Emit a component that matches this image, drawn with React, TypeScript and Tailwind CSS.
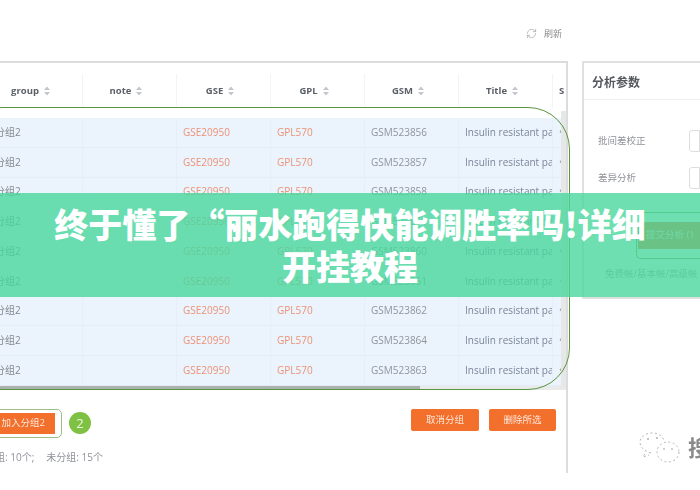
import { RefreshCw } from 'lucide-react';

const font = "font-['Open_Sans','Noto_Sans_CJK_SC',sans-serif]";

const columns = [
  { label: 'group', width: 'w-[113px] pl-[16px]' },
  { label: 'note', width: 'w-[94px]' },
  { label: 'GSE', width: 'w-[94px]' },
  { label: 'GPL', width: 'w-[94px]' },
  { label: 'GSM', width: 'w-[94px]' },
  { label: 'Title', width: 'w-[94px]' },
];

const samples = ['GSM523856', 'GSM523857', 'GSM523858', 'GSM523859', 'GSM523860', 'GSM523861', 'GSM523862', 'GSM523864', 'GSM523863'];

function SortCaret() {
  return (
    <svg width="8" height="10" viewBox="0 0 8 10" className="ml-[4px] shrink-0">
      <path d="M4 0.5 L7 4 H1 Z" fill="#c3c7cc" />
      <path d="M4 9.5 L7 6 H1 Z" fill="#c3c7cc" />
    </svg>
  );
}

function TableHeader() {
  return (
    <div className="mt-[11px] flex h-[34px]">
      {columns.map((col) => (
        <div key={col.label} className={`${col.width} flex shrink-0 items-center justify-center border-r border-[#f3f4f6] pr-[6px] text-[9.5px] font-bold text-[#5c6168]`}>
          {col.label}
          <SortCaret />
        </div>
      ))}
      <div className="flex items-center pl-[6px] text-[9.5px] font-bold text-[#5c6168]">S</div>
    </div>
  );
}

function Row({ gsm }: { gsm: string }) {
  return (
    <div className="flex h-[29.75px] items-center border-b border-[#e4edf7] bg-[#ebf3fc] text-[10px] whitespace-nowrap">
      <div className="flex h-full w-[113px] shrink-0 items-center border-r border-[#e6eff9] pl-[25px] text-[#85898f]">分组2</div>
      <div className="h-full w-[94px] shrink-0 border-r border-[#e6eff9]" />
      <div className="flex h-full w-[94px] shrink-0 items-center border-r border-[#e6eff9] pl-[6px] text-[#ec9277]">GSE20950</div>
      <div className="flex h-full w-[94px] shrink-0 items-center border-r border-[#e6eff9] pl-[6px] text-[#ec9277]">GPL570</div>
      <div className="flex h-full w-[94px] shrink-0 items-center border-r border-[#e6eff9] pl-[6px] text-[#90959c]">{gsm}</div>
      <div className="flex h-full w-[94px] shrink-0 items-center overflow-hidden border-r border-[#e6eff9] pl-[6px] text-[#7a8799]">Insulin resistant patient</div>
      <div className="pl-[6px] text-[#a3a8ae]">•</div>
    </div>
  );
}

function WechatMark() {
  return (
    <svg width="44" height="34" viewBox="0 0 44 34" className="absolute left-[638px] top-[432px]" fill="none" stroke="#b4b4b4" strokeWidth="1" strokeDasharray="2 2.5">
      <path d="M13 21 C6 19 2 15 2 10 C2 5 8 1 14 1 C20 1 25 4 26 9" />
      <ellipse cx="30" cy="20" rx="11" ry="10" />
      <path d="M7 22 L5 25 L11 23" />
      <circle cx="10" cy="7" r="0.8" fill="#777" stroke="none" />
      <circle cx="19" cy="6" r="0.8" fill="#777" stroke="none" />
      <circle cx="26" cy="17" r="0.8" fill="#999" stroke="none" />
      <circle cx="34" cy="17" r="0.8" fill="#999" stroke="none" />
    </svg>
  );
}

export default function App() {
  return (
    <div className={`relative h-[490px] w-[700px] overflow-hidden bg-white ${font}`}>
      <div className="h-full blur-[0.6px]">
        <div className="flex h-[61px] items-start justify-end pt-[27px] pr-[138px] text-[9px] text-[#8b8b8b]">
          <RefreshCw className="mr-[7px] mt-[1px] h-[11px] w-[11px] text-[#a5a5a5]" strokeWidth={1.5} />
          刷新
        </div>
        <div className="flex items-start">
          <div className="relative flex h-[412px] w-[568px] shrink-0 flex-col overflow-hidden border-t-2 border-r-2 border-[#dcdcdc]">
            <div className="-ml-[30px] w-[640px]">
              <TableHeader />
              <div className="h-[10px]" />
              {samples.map((gsm) => (
                <Row key={gsm} gsm={gsm} />
              ))}
              <div className="h-[4px] bg-[#e9eaea]">
                <div className="h-full w-[450px] bg-[#a9b2ab]" />
              </div>
            </div>
            <div className="absolute right-0 top-[48px] h-[276px] w-[5px] bg-[#e6e7e8]" />
            <div className="flex items-start justify-between pt-[19px] pr-[10px]">
              <div className="flex items-center">
                <div className="-ml-[30px] rounded-[5px] border border-[#9dbf86] py-[3px] pr-[6px]">
                  <div className="flex h-[21px] w-[84px] items-center justify-end bg-[#f36f2c] pr-[10px] text-[9.5px] text-[#fde6d8]">加入分组2</div>
                </div>
                <div className="ml-[7px] flex h-[22px] w-[22px] items-center justify-center rounded-full bg-[#7fc243] text-[13px] text-[#eef8e2]">2</div>
              </div>
              <div className="flex gap-[10px]">
                <button className="h-[22px] w-[68px] rounded-[2px] bg-[#f36f2c] text-[9.5px] text-[#fde6d8]">取消分组</button>
                <button className="h-[22px] w-[67px] rounded-[2px] bg-[#f36f2c] text-[9.5px] text-[#fde6d8]">删除所选</button>
              </div>
            </div>
            <div className="-ml-[25px] mt-[12px] flex gap-[12px] text-[10px] text-[#90939a]">
              <span>已分组: 10个;</span>
              <span>未分组: 15个</span>
            </div>
          </div>
          <div className="ml-[14px] h-[238px] grow border-t-2 border-b-2 border-l-2 border-[#e0e0e0]">
            <div className="flex h-[37px] items-center border-b border-[#eeeeee] pt-[3px] pl-[8px] text-[12px] font-semibold text-[#55585c]">分析参数</div>
            <div className="mt-[30px] flex h-[22px] items-center pl-[14px] text-[9.5px] text-[#90939a]">
              <span className="w-[91px]">批间差校正</span>
              <div className="h-[22px] grow rounded-l-[3px] border border-[#dddddd]" />
            </div>
            <div className="mt-[15px] flex h-[22px] items-center pl-[14px] text-[9.5px] text-[#90939a]">
              <span className="w-[91px]">差异分析</span>
              <div className="h-[22px] grow rounded-l-[3px] border border-[#dddddd]" />
            </div>
            <div className="mt-[23px] ml-[52px] rounded-l-[5px] border-y border-l border-[#6d9f58] py-[9px] pl-[1px]">
              <div className="flex h-[27px] items-center whitespace-nowrap bg-[#f36f2c] pl-[8px] text-[9.5px] text-[#fde6d8]">提交分析 (1</div>
            </div>
            <div className="mt-[8px] whitespace-nowrap pl-[21px] text-[9.5px] text-[#9a9a9a]">免费帐/基本帐/高级帐</div>
          </div>
        </div>
        <WechatMark />
        <div className="absolute left-[688px] top-[436px] text-[22px] leading-none font-semibold text-[#8a8a8a]">搜</div>
      </div>

      <div className="absolute -left-[40px] top-[107px] h-[283px] w-[610px] rounded-[42px] border border-[#5b9440]" />

      <div className="absolute inset-x-0 top-[193px] flex h-[104px] items-center justify-center bg-[#48d79c]/80 px-[50px]">
        <h1 className="text-center text-[34px] leading-[42px] font-black text-white font-['Noto_Sans_CJK_SC',sans-serif]">
          终于懂了“丽水跑得快能调胜率吗!详细开挂教程
        </h1>
      </div>
    </div>
  );
}
